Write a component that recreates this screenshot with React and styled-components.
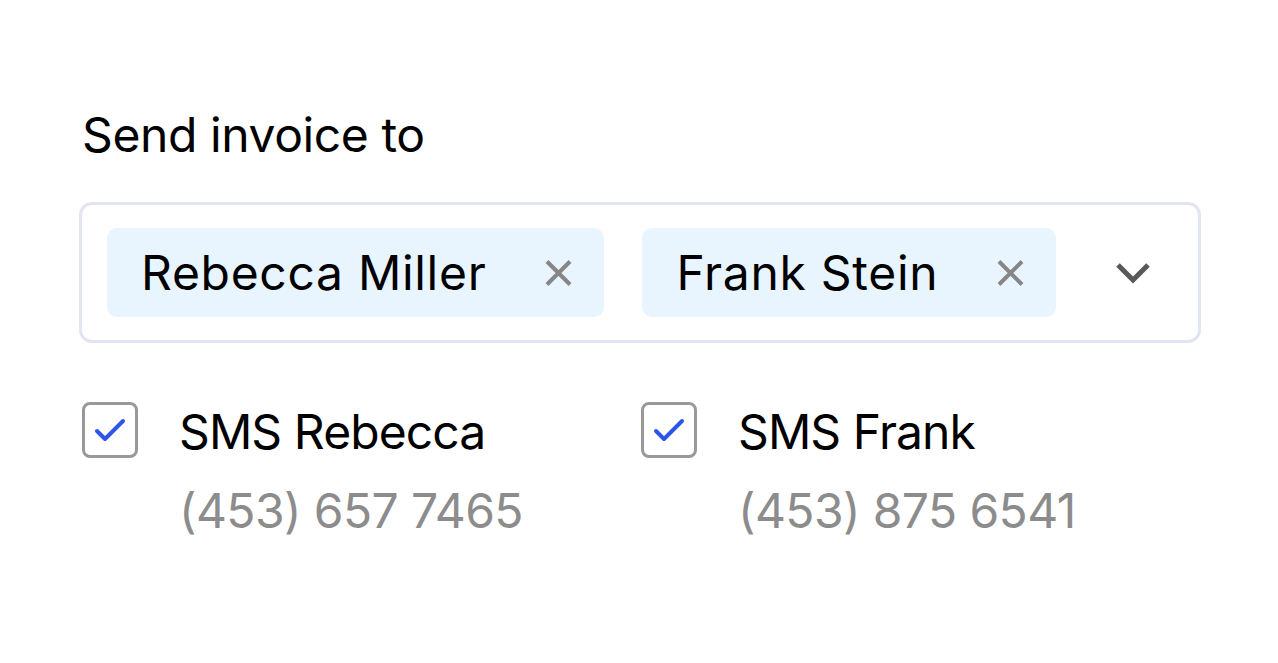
import React from "react";
import styled, { createGlobalStyle } from "styled-components";

const Global = createGlobalStyle`
  html, body { margin: 0; padding: 0; background: #fff; }
  body { font-family: Inter, "Noto Sans", sans-serif; color: #000; }
`;

const Page = styled.div`
  padding: 106px 77px 0 79px;
  width: 1122px;
`;

const Label = styled.div`
  font-size: 48px;
  line-height: 58px;
  padding-left: 3px;
  font-weight: 400;
  letter-spacing: -0.4px;
`;

const SelectBox = styled.div`
  margin-top: 38px;
  box-sizing: border-box;
  height: 141px;
  border: 3px solid #e2e4f2;
  border-radius: 13px;
  display: flex;
  align-items: center;
  padding: 0 41px 0 25px;
`;

const Chips = styled.div`
  display: flex;
  gap: 38px;
  flex: 1;
`;

const Chip = styled.div`
  display: flex;
  align-items: center;
  height: 89px;
  box-sizing: border-box;
  padding: 0 22px 0 34px;
  background: #e8f4fe;
  border-radius: 10px;
  font-size: 48px;
  letter-spacing: 0.7px;
  gap: 48px;
`;

const IconBox = styled.span`
  width: 48px;
  height: 48px;
  display: flex;
  align-items: center;
  justify-content: center;
`;

const Options = styled.div`
  margin-top: 49px;
  display: grid;
  grid-template-columns: 559px 1fr;
`;

const Option = styled.div`
  display: flex;
  align-items: flex-start;
  gap: 41px;
  padding-left: 3px;
`;

const Checkbox = styled.span`
  margin-top: 10px;
  width: 56px;
  height: 56px;
  flex: none;
  box-sizing: border-box;
  border: 3px solid #999;
  border-radius: 8px;
  display: flex;
  align-items: center;
  justify-content: center;
`;

const TextCol = styled.div`
  display: flex;
  flex-direction: column;
`;

const Title = styled.div`
  font-size: 48px;
  line-height: 79px;
  letter-spacing: -0.9px;
  color: #000;
`;

const Phone = styled.div`
  font-size: 48px;
  line-height: 79px;
  letter-spacing: -0.6px;
  color: #8c8c8c;
`;

const XIcon = () => (
  <svg width="27" height="26" viewBox="0 0 27 26">
    <path d="M2 1.5 L25 24.5 M25 1.5 L2 24.5" stroke="#868686" strokeWidth="4" fill="none" />
  </svg>
);

const Chevron = () => (
  <svg width="36" height="24" viewBox="0 0 36 24">
    <path d="M3 4 L18 19 L33 4" stroke="#595959" strokeWidth="5" fill="none" />
  </svg>
);

const Check = () => (
  <svg width="32" height="26" viewBox="0 0 32 26">
    <path d="M3 14 L11 22 L29 4" stroke="#2e56e6" strokeWidth="4" fill="none" strokeLinecap="round" strokeLinejoin="round" />
  </svg>
);

const people = [
  { name: "Rebecca Miller", first: "Rebecca", phone: "(453) 657 7465" },
  { name: "Frank Stein", first: "Frank", phone: "(453) 875 6541" },
];

export default function App() {
  return (
    <>
      <Global />
      <Page>
        <Label>Send invoice to</Label>
        <SelectBox>
          <Chips>
            {people.map((p) => (
              <Chip key={p.name}>
                <span>{p.name}</span>
                <IconBox><XIcon /></IconBox>
              </Chip>
            ))}
          </Chips>
          <IconBox><Chevron /></IconBox>
        </SelectBox>
        <Options>
          {people.map((p) => (
            <Option key={p.name}>
              <Checkbox><Check /></Checkbox>
              <TextCol>
                <Title>SMS {p.first}</Title>
                <Phone>{p.phone}</Phone>
              </TextCol>
            </Option>
          ))}
        </Options>
      </Page>
    </>
  );
}
